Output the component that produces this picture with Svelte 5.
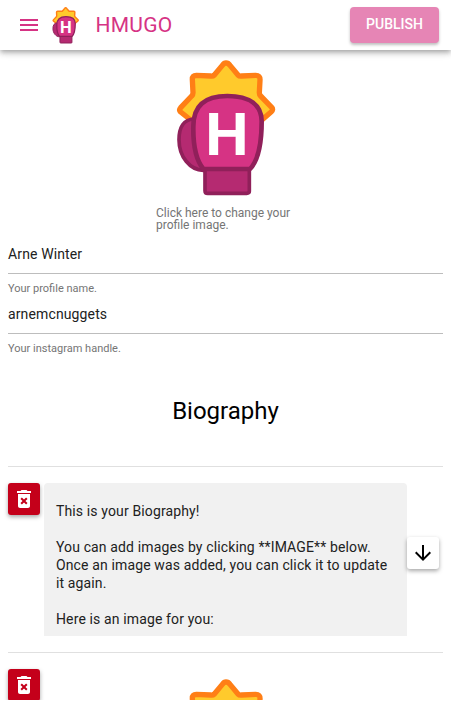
<script>
  const bio = `This is your Biography!

You can add images by clicking **IMAGE** below. Once an image was added, you can click it to update it again.

Here is an image for you:`;
</script>

{#snippet glove(cls, letter)}
  <svg class={cls} viewBox="33 30 297 411" aria-hidden="true">
    <path d="M183 39 Q190 39 195 46 L219 75 Q223 79 230 78 L272 76 Q286 76 285 90 L283 128 Q283 134 287 138 L320 172 Q326 179 319 185 L270 228 L100 228 L47 186 Q41 180 47 173 L80 138 Q84 134 84 128 L82 88 Q82 76 94 76 L137 78 Q144 79 148 75 L172 46 Q177 39 183 39Z" fill="#ffca2c" stroke="#ff7f16" stroke-width="16" stroke-linejoin="round" />
    <path d="M88 207 C56 207 42 233 42 269 C42 320 75 360 115 361 L115 207Z" fill="#b52a71" stroke="#90205a" stroke-width="11" />
    <path d="M120 355 H253 V424 Q253 430 245 430 H128 Q120 430 120 422Z" fill="#b52a71" stroke="#90205a" stroke-width="11" />
    <path d="M115 357 C94 331 84 283 85 229 C85 167 119 138 187 138 C255 138 290 166 290 214 C290 276 280 331 255 357Z" fill="#d63384" stroke="#90205a" stroke-width="14" stroke-linejoin="round" />
    {#if letter}
      <text x="186" y="315" text-anchor="middle" textLength="130" lengthAdjust="spacingAndGlyphs">{letter}</text>
    {/if}
  </svg>
{/snippet}

{#snippet trash()}
  <button class="square danger" aria-label="Delete">
    <svg width="24" height="24" viewBox="0 0 24 24"><path fill="#fff" fill-rule="evenodd" d="M6 19c0 1.100.9 2 2 2h8c1.100 0 2-.9 2-2V7H6zM8.460 11.880l1.410-1.410L12 12.590l2.120-2.120 1.410 1.410L13.410 14l2.120 2.120-1.410 1.410L12 15.410l-2.120 2.120-1.410-1.410L10.590 14zM15.500 4l-1-1h-5l-1 1H5v2h14V4z" /></svg>
  </button>
{/snippet}

<div class="app">
  <header>
    <svg class="menu" width="24" height="24" viewBox="0 0 24 24"><path fill="#d63384" d="M3 18h18v-2H3zm0-5h18v-2H3zm0-7v2h18V6z" /></svg>
    {@render glove('brand', 'H')}
    <span class="title">HMUGO</span>
    <button class="publish">PUBLISH</button>
  </header>
  <main>
    <div class="profile">
      {@render glove('large', 'H')}
      <p>Click here to change your profile image.</p>
    </div>
    <div class="field"><div class="value">Arne Winter</div><small>Your profile name.</small></div>
    <div class="field"><div class="value">arnemcnuggets</div><small>Your instagram handle.</small></div>
    <h1>Biography</h1>
    <section class="block">
      {@render trash()}
      <div class="editor">{bio}</div>
      <button class="square down" aria-label="Move down">
        <svg width="24" height="24" viewBox="0 0 24 24"><path fill="#000" d="M20 12l-1.410-1.410L13 16.170V4h-2v12.170l-5.580-5.590L4 12l8 8z" /></svg>
      </button>
    </section>
    <section class="block second">
      {@render trash()}
      <div class="picture">{@render glove('large', '')}</div>
    </section>
  </main>
</div>

<style>
  :global(body) { margin: 0; background: #fff; }
  .app { width: 451px; height: 700px; overflow: hidden; font-family: Roboto, sans-serif; background: #fff; color: #212121; }
  .app, .app * { box-sizing: border-box; }
  button { border: 0; padding: 0; font-family: inherit; }
  svg { display: block; flex: none; overflow: visible; }
  svg text { font: 700 178px Roboto, sans-serif; fill: #fff; }
  header { position: relative; height: 50px; display: flex; align-items: center; padding: 0 12px 0 17px; background: #fff; box-shadow: 0 2px 4px -1px rgba(0,0,0,.2), 0 4px 5px rgba(0,0,0,.14), 0 1px 10px rgba(0,0,0,.12); }
  .brand { width: 27px; height: 37px; margin: 0 0 0 10.600px; }
  .title { margin-left: 17px; font-size: 21px; letter-spacing: .2px; color: #d63384; }
  .publish { margin-left: auto; width: 89px; height: 36px; padding-bottom: 2px; border-radius: 4px; background: #e685b5; color: #fff; font-size: 14px; font-weight: 500; box-shadow: 0 2px 3px rgba(0,0,0,.25); }
  main { padding: 10px 8px 0; }
  .profile { width: 139px; margin: 0 auto; }
  .large { width: 99px; height: 137px; margin: 0 auto; }
  .profile p { margin: 10px 0 0; font-size: 12px; line-height: 12px; color: #757575; }
  .field { height: 60px; }
  .value { height: 43px; padding-top: 14px; border-bottom: 1px solid #bdbdbd; font-size: 14px; line-height: 18px; letter-spacing: .13px; }
  .field small { display: block; padding-top: 8px; font-size: 11px; line-height: 13px; color: #757575; }
  h1 { margin: 46px 0 41px; text-align: center; font-size: 24px; line-height: 28px; font-weight: 400; color: #000; }
  .block { display: flex; align-items: flex-start; border-top: 1px solid #e0e0e0; padding: 16px 4px 16px 0; }
  .square { width: 32px; height: 32px; flex: none; display: grid; place-items: center; border-radius: 3px; background: #fff; box-shadow: 0 2px 4px rgba(0,0,0,.35); }
  .danger { background: #c4001a; }
  .editor { width: 363px; height: 153px; margin-left: 4px; padding: 19px 12px 0; border-radius: 4px 4px 0 0; background: #f1f1f1; font-size: 14px; line-height: 18px; letter-spacing: .13px; white-space: pre-wrap; overflow: hidden; }
  .down { align-self: center; margin-top: -13px; }
  .second { padding-right: 0; }
  .picture { flex: 1; padding: 10px 33px 0 0; }
</style>
